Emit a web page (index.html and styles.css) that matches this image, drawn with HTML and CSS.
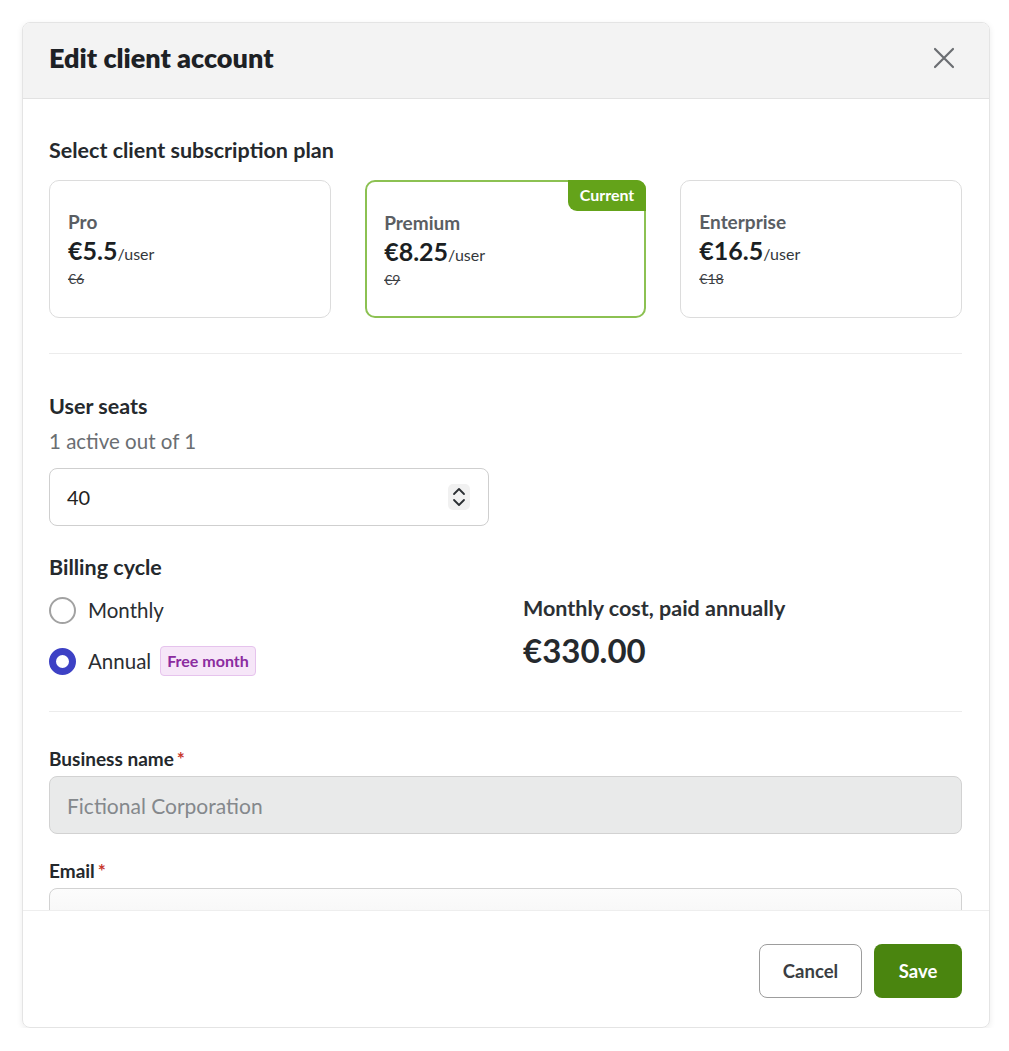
FILE: index.html
```html
<!DOCTYPE html>
<html lang="en">
<head>
  <meta charset="UTF-8">
  <title>Edit client account</title>
  <link rel="stylesheet" href="styles.css">
</head>
<body>

  <div class="modal">
    <div class="modal-header">
      <h2 class="title">Edit client account</h2>
      <button class="close" aria-label="Close">
        <svg width="22" height="22" viewBox="0 0 22 22">
          <path d="M2 2 L20 20 M20 2 L2 20" stroke="#6b6e72" stroke-width="2.2" stroke-linecap="round"/>
        </svg>
      </button>
    </div>

    <div class="modal-body">
      <div class="section-title">Select client subscription plan</div>
      <div class="plans">
        <div class="plan">
          <div class="plan-name">Pro</div>
          <div class="plan-price">€5.5<span>/user</span></div>
          <div class="plan-old">€6</div>
        </div>
        <div class="plan current">
          <div class="badge-current">Current</div>
          <div class="plan-name">Premium</div>
          <div class="plan-price">€8.25<span>/user</span></div>
          <div class="plan-old">€9</div>
        </div>
        <div class="plan">
          <div class="plan-name">Enterprise</div>
          <div class="plan-price">€16.5<span>/user</span></div>
          <div class="plan-old">€18</div>
        </div>
      </div>

      <hr class="divider divider-plans">

      <div class="seats">
        <div class="section-title">User seats</div>
        <div class="hint">1 active out of 1</div>
        <div class="number-input">
          <span>40</span>
          <span class="spinner">
            <svg width="14" height="22" viewBox="0 0 14 22">
              <path d="M2 8 L7 3 L12 8 M2 14 L7 19 L12 14" fill="none" stroke="#2b2f33" stroke-width="1.8" stroke-linecap="round" stroke-linejoin="round"/>
            </svg>
          </span>
        </div>
      </div>

      <div class="section-title billing-title">Billing cycle</div>
      <div class="billing">
        <div class="options">
          <label class="option">
            <span class="radio"></span>
            Monthly
          </label>
          <label class="option">
            <span class="radio checked"></span>
            Annual
            <span class="badge-free">Free month</span>
          </label>
        </div>
        <div class="cost">
          <div class="cost-label">Monthly cost, paid annually</div>
          <div class="cost-value">€330.00</div>
        </div>
      </div>

      <hr class="divider divider-billing">

      <div class="field">
        <div class="field-label">Business name<span class="req">*</span></div>
        <div class="text-input disabled">Fictional Corporation</div>
      </div>
      <div class="field">
        <div class="field-label">Email<span class="req">*</span></div>
        <div class="text-input email"></div>
      </div>
    </div>

    <div class="modal-footer">
      <button class="btn btn-cancel">Cancel</button>
      <button class="btn btn-save">Save</button>
    </div>
  </div>

</body>
</html>
```

FILE: styles.css
```css
body {
  margin: 0;
  background: #fff;
  font-family: Lato, "Liberation Sans", sans-serif;
  color: #1f2327;
}

.modal {
  margin: 22px 0 0 22px;
  width: 968px;
  height: 1006px;
  box-sizing: border-box;
  border: 1px solid #e4e4e4;
  border-radius: 8px;
  box-shadow: 0 2px 6px rgba(0, 0, 0, 0.08);
  overflow: hidden;
  display: flex;
  flex-direction: column;
}

.modal-header {
  height: 76px;
  flex-shrink: 0;
  box-sizing: border-box;
  background: #f3f3f3;
  border-bottom: 1px solid #e2e2e2;
  display: flex;
  align-items: center;
  justify-content: space-between;
  padding: 0 34px 6px 26px;
}

.title {
  margin: 0;
  font-size: 27px;
  font-weight: 800;
  color: #1d2125;
}

.close {
  background: none;
  border: none;
  padding: 0;
  cursor: pointer;
  display: flex;
}

.modal-body {
  height: 811px;
  flex-shrink: 0;
  overflow: hidden;
  padding: 38px 27px 0 26px;
  box-sizing: border-box;
}

.section-title {
  font-size: 21.5px;
  line-height: 26px;
  font-weight: 700;
  color: #25292d;
}

.plans {
  display: grid;
  grid-template-columns: repeat(3, 1fr);
  gap: 34px;
  margin-top: 17px;
}

.plan {
  position: relative;
  height: 138px;
  box-sizing: border-box;
  border: 1.5px solid #dcdcdc;
  border-radius: 10px;
  padding: 29px 18px 0;
}

.plan.current {
  border: 2px solid #8cc152;
  padding: 28.5px 17.5px 0;
}

.badge-current {
  position: absolute;
  top: -2px;
  right: -2px;
  background: #64a31a;
  color: #fff;
  font-size: 16px;
  line-height: 20px;
  font-weight: 700;
  padding: 5px 12px 6px 12px;
  border-radius: 0 9px 0 9px;
}

.plan-name {
  font-size: 19px;
  line-height: 24px;
  font-weight: 700;
  color: #5a5e63;
}

.plan-price {
  font-size: 25px;
  line-height: 32px;
  font-weight: 700;
  color: #1b1f23;
}

.plan-price span {
  font-size: 16px;
  font-weight: 400;
  color: #33373b;
}

.plan-old {
  font-size: 14px;
  line-height: 18px;
  color: #3c4044;
  text-decoration: line-through;
}

.divider {
  border: none;
  border-top: 1px solid #ececec;
  margin: 0;
}

.divider-plans {
  margin-top: 35px;
}

.seats {
  margin-top: 39px;
  width: 440px;
}

.hint {
  font-size: 20.5px;
  line-height: 24px;
  color: #6a6e72;
  margin-top: 10px;
}

.number-input {
  margin-top: 15px;
  height: 58px;
  box-sizing: border-box;
  border: 1.5px solid #cfcfcf;
  border-radius: 8px;
  display: flex;
  align-items: center;
  justify-content: space-between;
  padding: 0 18px 0 17px;
  font-size: 20px;
  color: #222;
}

.spinner {
  display: flex;
  background: #f1f1f1;
  border-radius: 5px;
  padding: 2px 4px;
}

.billing-title {
  margin-top: 28px;
}

.billing {
  display: grid;
  grid-template-columns: 440px 1fr;
  gap: 34px;
  margin-top: 16px;
}

.options {
  display: flex;
  flex-direction: column;
  gap: 23px;
}

.option {
  display: flex;
  align-items: center;
  gap: 12px;
  font-size: 20.5px;
  color: #2a2e32;
  height: 28px;
}

.radio {
  width: 27px;
  height: 27px;
  box-sizing: border-box;
  border: 2px solid #a2a2a2;
  border-radius: 50%;
}

.radio.checked {
  border: 7px solid #3d41c5;
}

.badge-free {
  margin-left: -3px;
  font-size: 16px;
  font-weight: 700;
  color: #8b2c9f;
  background: #f6e6f8;
  border: 1px solid #e6c3ed;
  border-radius: 4px;
  padding: 4px 6px 5px;
}

.cost-label {
  font-size: 21.5px;
  line-height: 24px;
  font-weight: 700;
  color: #2c3034;
}

.cost-value {
  font-size: 33px;
  line-height: 40px;
  font-weight: 700;
  color: #25292d;
  margin-top: 10px;
}

.divider-billing {
  margin-top: 36px;
}

.field {
  margin-top: 36px;
}

.field + .field {
  margin-top: 26px;
}

.field-label {
  font-size: 19px;
  line-height: 22px;
  font-weight: 700;
  color: #24282c;
}

.req {
  color: #c8372d;
  margin-left: 3px;
}

.text-input {
  margin-top: 6px;
  height: 58px;
  box-sizing: border-box;
  border: 1.5px solid #d2d2d2;
  border-radius: 8px;
  display: flex;
  align-items: center;
  padding: 0 17px;
  font-size: 21px;
}

.text-input.disabled {
  background: #e9eaea;
  color: #84888c;
}

.text-input.email {
  background: linear-gradient(#fcfcfc, #f2f2f2);
}

.modal-footer {
  flex: 1;
  border-top: 1px solid #eeeeee;
  display: flex;
  justify-content: flex-end;
  gap: 12px;
  padding: 33px 27px 0 0;
}

.btn {
  height: 54px;
  border-radius: 8px;
  font-family: inherit;
  font-size: 18.5px;
  font-weight: 700;
  cursor: pointer;
}

.btn-cancel {
  width: 103px;
  background: #fff;
  border: 1.5px solid #9d9d9d;
  color: #3a3e42;
}

.btn-save {
  width: 88px;
  background: #4a850f;
  border: none;
  color: #fff;
}
```
